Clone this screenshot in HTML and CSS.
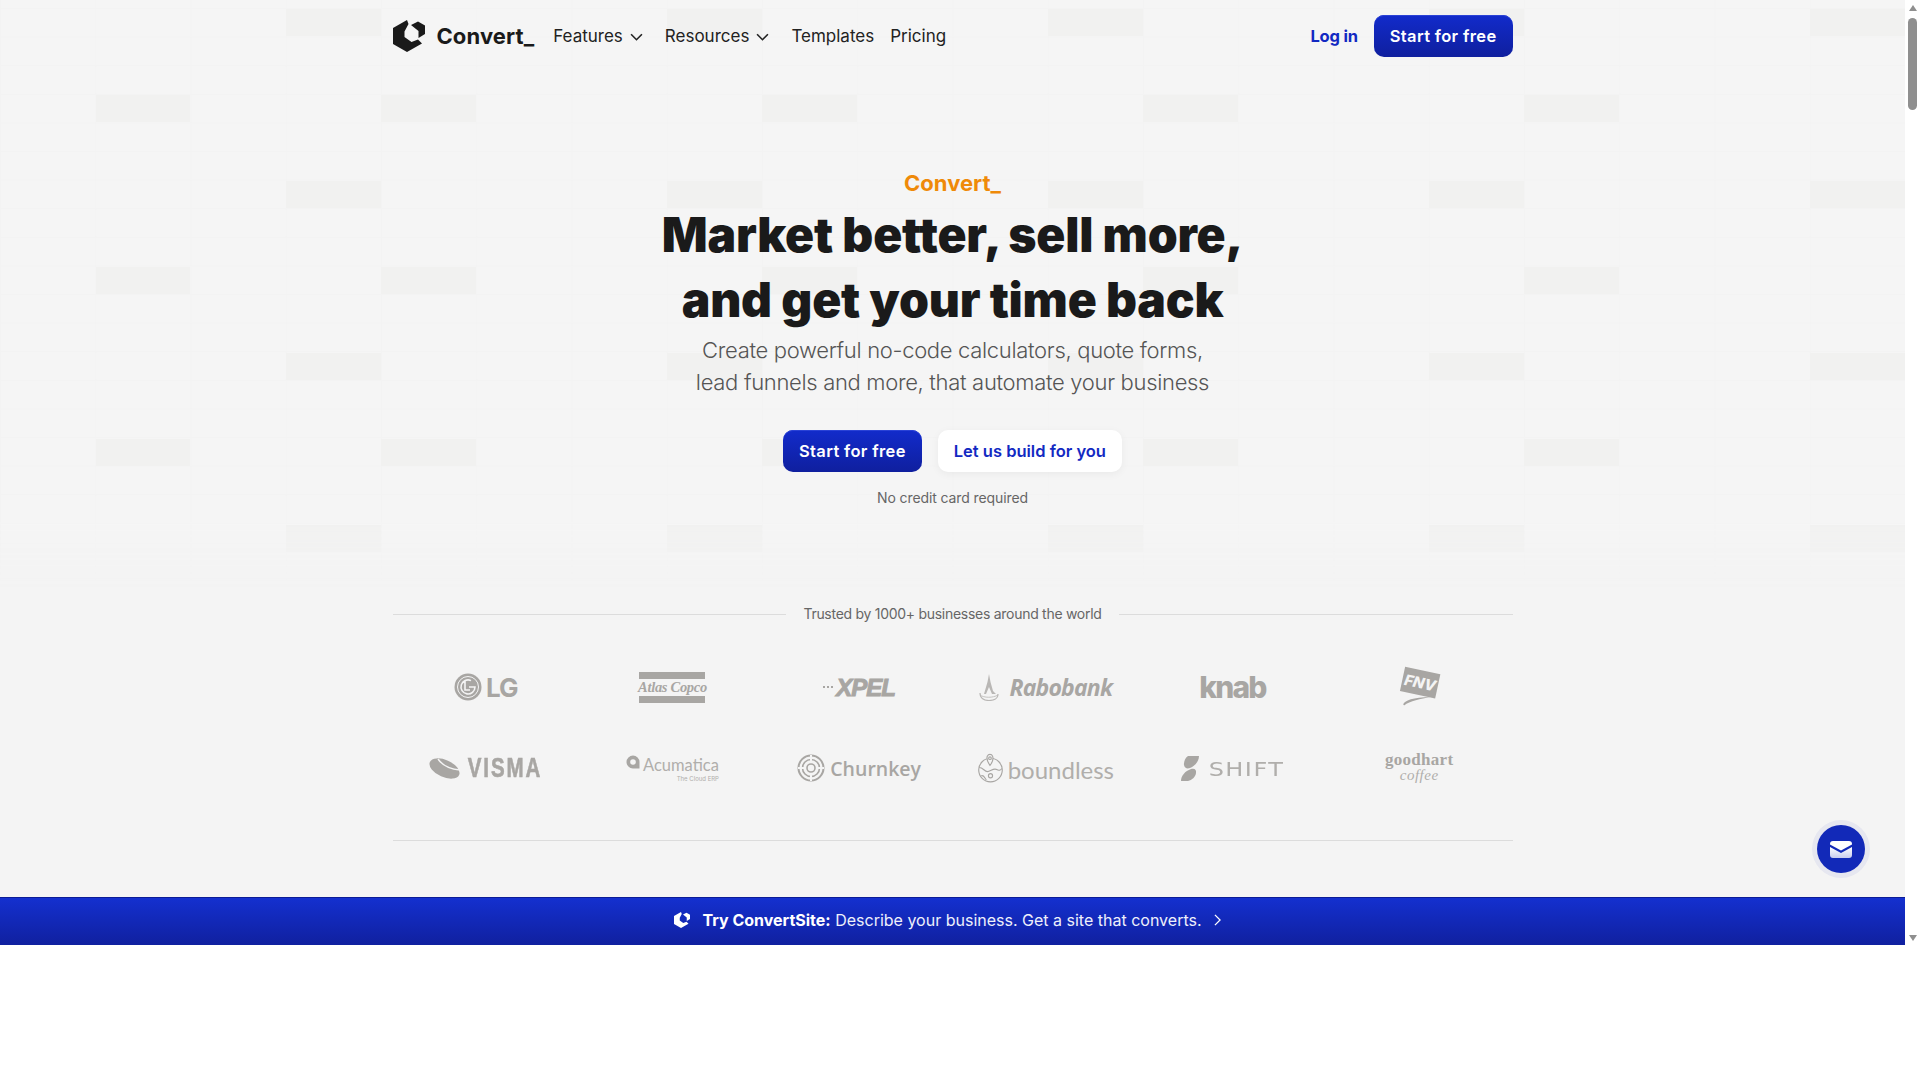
FILE: index.html
```html
<!DOCTYPE html>
<html lang="en">
<head>
    <meta charset="UTF-8">
    <meta name="viewport" content="width=device-width, initial-scale=1.0">
    <title>Convert_</title>
    <link rel="stylesheet" href="styles.css">
</head>
<body>
    <div class="window">
        <div class="page">
            <!-- faint checker grid behind the hero -->
            <svg class="hero-bg" width="1905" height="590" aria-hidden="true">
                <defs>
                    <pattern id="lines" width="95.25" height="28.6" patternUnits="userSpaceOnUse" y="8">
                        <path d="M0 0H95.25M0 0V28.6" fill="none" stroke="#f2f2f2" stroke-width="1"/>
                    </pattern>
                    <pattern id="cells-a" width="381" height="172" patternUnits="userSpaceOnUse">
                        <rect x="286" y="9" width="95" height="27" fill="#f1f1f0"/>
                        <rect x="0" y="95" width="95" height="27" fill="#f1f1f0"/>
                    </pattern>
                </defs>
                <rect width="1905" height="590" fill="url(#lines)"/>
                <rect x="95" width="1810" height="590" fill="url(#cells-a)"/>
                <rect x="96" y="95" width="94" height="27" fill="#f1f1f0"/>
                <rect x="96" y="267" width="94" height="27" fill="#f1f1f0"/>
                <rect x="96" y="439" width="94" height="27" fill="#f1f1f0"/>
            </svg>

            <div class="container">
                <nav class="nav">
                    <a class="brand">
                        <svg class="brand-mark" viewBox="0 0 32 32">
                            <path d="M14 0L15.500 4L11.500 11.500V17L18.500 22L25 19.500L29 23.500L14 32L0 24V8Z" fill="#1a1a1a"/>
                            <path d="M18 5L25 1.500L32 5.500V14L25.500 18V11Z" fill="#1a1a1a"/>
                        </svg>
                        <span class="brand-name">Convert_</span>
                    </a>
                    <ul class="nav-links">
                        <li>Features <svg class="chevron" viewBox="0 0 12 7"><path d="M1 1L6 6L11 1"/></svg></li>
                        <li>Resources <svg class="chevron" viewBox="0 0 12 7"><path d="M1 1L6 6L11 1"/></svg></li>
                        <li>Templates</li>
                        <li>Pricing</li>
                    </ul>
                    <a class="login">Log in</a>
                    <a class="btn btn-primary">Start for free</a>
                </nav>

                <section class="hero">
                    <div class="eyebrow">Convert_</div>
                    <h1>Market better, sell more,<br>and get your time back</h1>
                    <p>Create powerful no-code calculators, quote forms,<br>lead funnels and more, that automate your business</p>
                    <div class="hero-actions">
                        <a class="btn btn-primary">Start for free</a>
                        <a class="btn btn-white">Let us build for you</a>
                    </div>
                    <div class="hero-note">No credit card required</div>
                </section>

                <section class="trust">
                    <div class="trust-title"><span>Trusted by 1000+ businesses around the world</span></div>
                    <div class="logos">
                        <div class="logo">
                            <svg class="mark-lg" viewBox="0 0 28 28">
                                <circle cx="14" cy="14" r="13.5" fill="#a8a6a3"/>
                                <circle cx="14" cy="14" r="10.5" fill="none" stroke="#f4f4f4" stroke-width="1"/>
                                <path d="M11 7V17H16M15 14H21A7 7 0 1 1 17 7.6" fill="none" stroke="#f4f4f4" stroke-width="1.6"/>
                                <circle cx="10" cy="9" r="1.2" fill="#f4f4f4"/>
                            </svg>
                            <span class="t-lg">LG</span>
                        </div>
                        <div class="logo">
                            <div class="atlas"><span>Atlas Copco</span></div>
                        </div>
                        <div class="logo">
                            <span class="xpel-dots"></span>
                            <span class="t-xpel">XPEL</span>
                        </div>
                        <div class="logo">
                            <svg class="mark-rabo" viewBox="0 0 20 27">
                                <path d="M10 0L11.5 8L14 17L17 20H13L10 13L7 20H5L8.5 8Z" fill="#b9b7b5"/>
                                <path d="M1 19C1 25 6 26.5 10 26.5S19 25 19 20" fill="none" stroke="#b9b7b5" stroke-width="1.2"/>
                                <path d="M1 21C5 24 14 24 19 21" fill="none" stroke="#b9b7b5" stroke-width=".8"/>
                            </svg>
                            <span class="t-rabo">Rabobank</span>
                        </div>
                        <div class="logo"><span class="t-knab">knab</span></div>
                        <div class="logo">
                            <div class="fnv">
                                <span>FNV</span>
                                <svg viewBox="0 0 30 10"><path d="M1 9C2 5 12 1 30 1C20 3 8 5 2 10Z" fill="#a8a6a3"/></svg>
                            </div>
                        </div>

                        <div class="logo">
                            <svg class="mark-visma" viewBox="0 0 31 21">
                                <ellipse cx="15.5" cy="10.5" rx="16" ry="8.5" transform="rotate(24 15.500 10.500)" fill="#a8a6a3"/>
                                <path d="M9 1C13 7 20 11 31 12" fill="none" stroke="#f4f4f4" stroke-width="1.4"/>
                            </svg>
                            <span class="t-visma">VISMA</span>
                        </div>
                        <div class="logo">
                            <svg class="mark-acu" viewBox="0 0 14 14">
                                <path d="M7 .5A6.5 6.5 0 0 0 .5 7C.5 10.5 3.5 13.5 7 13.5H13.5V7A6.5 6.5 0 0 0 7 .5Z" fill="#a8a6a3"/>
                                <circle cx="7" cy="7" r="2.8" fill="#f4f4f4"/>
                            </svg>
                            <div class="acu">
                                <span class="t-acu">Acumatica</span>
                                <span class="t-acu-sub">The Cloud ERP</span>
                            </div>
                        </div>
                        <div class="logo">
                            <svg class="mark-churn" viewBox="0 0 28 28" fill="none" stroke="#a8a6a3">
                                <circle cx="14" cy="14" r="12.5" stroke-width="2"/>
                                <circle cx="14" cy="14" r="8.5" stroke-width="1.6"/>
                                <circle cx="14" cy="14" r="4" stroke-width="1.6"/>
                                <path d="M14 1V7M14 21V27M1 14H7M21 14H27" stroke="#f4f4f4" stroke-width="2"/>
                            </svg>
                            <span class="t-churn">Churnkey</span>
                        </div>
                        <div class="logo">
                            <svg class="mark-bound" viewBox="0 0 24 29" fill="none" stroke="#a8a6a3" stroke-width="1.1">
                                <circle cx="12" cy="16.5" r="11.4"/>
                                <path d="M9 3C7.5 6 9.5 9 11.5 12C14 9 15 6 14 3A2.700 2.700 0 0 0 9 3Z" fill="#f4f4f4"/>
                                <circle cx="11.5" cy="5" r="1.3"/>
                                <path d="M1 14C5 14 6 18 9 18S15 14 18 16S23 15 23 15M3 22C6 21 6 24 8 26"/>
                                <circle cx="12" cy="22" r="2"/>
                            </svg>
                            <span class="t-bound">boundless</span>
                        </div>
                        <div class="logo">
                            <svg class="mark-shift" viewBox="0 0 18 25">
                                <path d="M7 0H18C18 5 14 10 9 12C6 13 3.5 12 3 9C2.7 6 4 2 7 0Z" fill="#a8a6a3"/>
                                <path d="M10 13C14 12 15.5 14 15 17C14.5 21 11 24 7 25H0C0 20 4 15 10 13Z" fill="#a8a6a3"/>
                            </svg>
                            <span class="t-shift">SHIFT</span>
                        </div>
                        <div class="logo">
                            <div class="goodhart">
                                <span class="t-good">goodhart</span>
                                <span class="t-coffee">coffee</span>
                            </div>
                        </div>
                    </div>
                    <div class="trust-end"></div>
                </section>
            </div>

            <div class="banner">
                <svg class="banner-mark" viewBox="0 0 32 32">
                    <path d="M14 0L15.500 4L11.500 11.500V17L18.500 22L25 19.500L29 23.500L14 32L0 24V8Z" fill="#fff"/>
                    <path d="M18 5L25 1.500L32 5.500V14L25.500 18V11Z" fill="#fff"/>
                </svg>
                <span><b>Try ConvertSite:</b> Describe your business. Get a site that converts.</span>
                <svg class="banner-arrow" viewBox="0 0 8 14"><path d="M1 1L7 7L1 13"/></svg>
            </div>

            <a class="chat-btn">
                <svg viewBox="0 0 22 17">
                    <defs>
                        <linearGradient id="env" x1="0" y1="0" x2="0" y2="1">
                            <stop offset="0" stop-color="#fff"/>
                            <stop offset="1" stop-color="#c9cdee"/>
                        </linearGradient>
                    </defs>
                    <path d="M3 0H19A3 3 0 0 1 22 3V3.5L11 9.5L0 3.5V3A3 3 0 0 1 3 0Z" fill="#fff"/>
                    <path d="M0 6L11 12L22 6V14A3 3 0 0 1 19 17H3A3 3 0 0 1 0 14Z" fill="url(#env)"/>
                </svg>
            </a>
        </div>

        <div class="scrollbar">
            <span class="arrow-up"></span>
            <span class="thumb"></span>
            <span class="arrow-down"></span>
        </div>
    </div>
</body>
</html>
```

FILE: styles.css
```css
:root {
    --blue: #1229c2;
    --ink: #1a1a1a;
    --grey: #666;
    --logo: #a8a6a3;
}

* {
    box-sizing: border-box;
}

body {
    margin: 0;
    background: white;
    font-family: Inter, 'Liberation Sans', sans-serif;
    color: var(--ink);
    overflow: hidden;
}

.window {
    display: flex;
    height: 945px;
}

.page {
    position: relative;
    flex: 1;
    display: flex;
    flex-direction: column;
    background: #f4f4f4;
    overflow: hidden;
}

.hero-bg {
    position: absolute;
    top: 0;
    left: 0;
    background: #f5f5f5;
    -webkit-mask-image: linear-gradient(to bottom, black 88%, transparent);
    mask-image: linear-gradient(to bottom, black 88%, transparent);
}

.container {
    position: relative;
    width: 1120px;
    margin: 0 auto;
}

/* nav */
.nav {
    display: flex;
    align-items: center;
    height: 72px;
}

.brand {
    display: flex;
    align-items: center;
    gap: 12px;
}

.brand-mark {
    width: 32px;
    height: 32px;
}

.brand-name {
    font-size: 22px;
    font-weight: 700;
    letter-spacing: 0.1px;
}

.nav-links {
    display: flex;
    gap: 16px;
    margin: 0 auto 0 19px;
    padding: 0;
    list-style: none;
    font-size: 17px;
    color: #222;
}

.nav-links li {
    display: flex;
    align-items: center;
    gap: 7px;
}

.chevron {
    width: 13px;
    height: 8px;
    margin: 2px 6px 0 0;
    fill: none;
    stroke: #222;
    stroke-width: 1.5;
}

.login {
    margin-right: 16px;
    font-size: 16.5px;
    font-weight: 700;
    letter-spacing: -0.2px;
    color: var(--blue);
}

/* buttons */
.btn {
    display: inline-flex;
    align-items: center;
    height: 42px;
    padding: 0 16px;
    border-radius: 10px;
    font-size: 16.5px;
    font-weight: 600;
}

.btn-primary {
    background: linear-gradient(#122bcb, #0f1f9e);
    box-shadow: inset 0 1px 0 #2a42d6;
    color: white;
    letter-spacing: 0.35px;
}

.btn-white {
    background: white;
    box-shadow: 0 2px 8px rgba(0,0,0,0.05);
    color: var(--blue);
}

/* hero */
.hero {
    padding-top: 96px;
    text-align: center;
}

.eyebrow {
    font-size: 22px;
    line-height: 30px;
    font-weight: 700;
    color: #ef8a09;
}

.hero h1 {
    margin: 4px 0 0;
    font-size: 48px;
    line-height: 65px;
    font-weight: 900;
    letter-spacing: -0.2px;
    color: var(--ink);
}

.hero p {
    margin: 2px 0 0;
    font-size: 22px;
    line-height: 32px;
    font-weight: 300;
    letter-spacing: -0.32px;
    color: #555;
}

.hero-actions {
    display: flex;
    justify-content: center;
    gap: 16px;
    margin-top: 32px;
}

.hero-note {
    margin-top: 17px;
    font-size: 14px;
    line-height: 18px;
    letter-spacing: -0.1px;
    color: var(--grey);
}

/* trusted by */
.trust {
    margin-top: 97px;
}

.trust-title {
    display: flex;
    align-items: center;
    gap: 17px;
    font-size: 14px;
    line-height: 20px;
    letter-spacing: -0.28px;
    color: var(--grey);
}

.trust-title::before,
.trust-title::after {
    content: "";
    flex: 1;
    border-top: 1px solid #dcdcdc;
}

.logos {
    display: grid;
    grid-template-columns: repeat(6, 1fr);
    grid-auto-rows: 50px;
    row-gap: 31px;
    margin-top: 38px;
    color: var(--logo);
}

.logo {
    display: flex;
    align-items: center;
    justify-content: center;
    white-space: nowrap;
}

.trust-end {
    margin-top: 47px;
    border-top: 1px solid #dcdcdc;
}

/* logo wall, one block per brand */
.mark-lg {
    width: 28px;
    height: 28px;
    margin-right: 4px;
}

.t-lg {
    font-size: 26px;
    font-weight: 700;
    letter-spacing: -1px;
}

.atlas {
    display: flex;
    align-items: center;
    justify-content: center;
    width: 66px;
    height: 31px;
    border-top: 7px solid var(--logo);
    border-bottom: 7px solid var(--logo);
    font-family: 'Liberation Serif', serif;
    font-size: 14.5px;
    font-weight: 700;
    font-style: italic;
    letter-spacing: -0.3px;
    white-space: nowrap;
}

.xpel-dots {
    width: 12px;
    height: 2px;
    margin-right: 1px;
    background: linear-gradient(to right, var(--logo) 50%, transparent 50%) 0 0 / 4px 2px;
}

.t-xpel {
    margin-top: 1px;
    font-family: 'Liberation Sans', sans-serif;
    font-size: 24px;
    font-weight: 700;
    font-style: italic;
    letter-spacing: -1px;
    -webkit-text-stroke: 1px var(--logo);
}

.mark-rabo {
    width: 20px;
    height: 27px;
    margin-right: 10px;
}

.t-rabo {
    font-family: 'Open Sans', sans-serif;
    font-size: 23px;
    font-weight: 700;
    font-style: italic;
    letter-spacing: -0.8px;
}

.t-knab {
    font-size: 30px;
    font-weight: 800;
    letter-spacing: -1.8px;
}

.fnv {
    display: flex;
    flex-direction: column;
    align-items: center;
    width: 38px;
    margin-top: 2px;
    transform: rotate(12deg);
}

.fnv span {
    padding: 1px 2px;
    background: var(--logo);
    color: #f4f4f4;
    font-size: 15px;
    line-height: 23px;
    font-weight: 800;
    font-style: italic;
}

.fnv svg {
    width: 28px;
    height: 10px;
    margin-top: 1px;
    transform: rotate(-12deg);
}

.mark-visma {
    width: 31px;
    height: 21px;
    margin-right: 7px;
}

.t-visma {
    display: inline-block;
    margin: 0 -11.6px;
    font-family: 'Liberation Sans', sans-serif;
    font-size: 27px;
    font-weight: 700;
    letter-spacing: 2.5px;
    -webkit-text-stroke: 0.6px var(--logo);
    transform: scaleX(0.76);
}

.mark-acu {
    width: 14px;
    height: 14px;
    margin: 0 3px 12px 0;
}

.acu {
    display: flex;
    flex-direction: column;
    align-items: flex-end;
}

.t-acu {
    font-family: Lato, sans-serif;
    font-size: 16.5px;
    line-height: 20px;
    color: #b0aeab;
}

.t-acu-sub {
    font-size: 6px;
    line-height: 7px;
    color: #b0aeab;
}

.mark-churn {
    width: 28px;
    height: 28px;
    margin-right: 5px;
}

.t-churn {
    margin-top: 1px;
    font-family: 'Open Sans', sans-serif;
    font-size: 19.5px;
    font-weight: 600;
}

.mark-bound {
    width: 25px;
    height: 30px;
    margin-right: 5px;
}

.t-bound {
    margin-top: 2px;
    font-family: Lato, sans-serif;
    font-size: 24px;
    color: #b0aeab;
}

.mark-shift {
    width: 18px;
    height: 25px;
    margin-right: 10px;
}

.t-shift {
    display: inline-block;
    margin: 1px 6px 0;
    font-family: 'DejaVu Sans', sans-serif;
    font-size: 20px;
    letter-spacing: 1.2px;
    color: #b0aeab;
    transform: scaleX(1.2);
}

.goodhart {
    display: flex;
    flex-direction: column;
    align-items: center;
    margin-top: -3px;
}

.t-good {
    font-family: 'Liberation Serif', serif;
    font-size: 17px;
    line-height: 16px;
    font-weight: 700;
    letter-spacing: 0.3px;
}

.t-coffee {
    font-family: 'Liberation Serif', serif;
    font-size: 15px;
    line-height: 14px;
    font-style: italic;
    letter-spacing: 0.5px;
    color: #b0aeab;
}

/* bottom banner */
.banner {
    position: relative;
    display: flex;
    align-items: center;
    justify-content: center;
    gap: 12px;
    height: 48px;
    margin-top: auto;
    padding: 0 10px 4px 0;
    border-top: 1px solid #0c1c96;
    background: linear-gradient(#1430cf, #10209f);
    color: #eef0fb;
    font-size: 16px;
}

.banner b {
    color: white;
    font-weight: 700;
}

.banner-mark {
    width: 16px;
    height: 16px;
}

.banner-arrow {
    width: 7px;
    height: 12px;
    fill: none;
    stroke: white;
    stroke-width: 1.5;
}

/* floating chat button */
.chat-btn {
    position: absolute;
    left: 1817px;
    top: 825px;
    display: flex;
    align-items: center;
    justify-content: center;
    width: 48px;
    height: 48px;
    border-radius: 50%;
    background: #1229b8;
    box-shadow: 0 0 0 5px rgba(18,41,194,0.06);
}

.chat-btn svg {
    width: 22px;
    height: 17px;
}

/* fake browser scrollbar */
.scrollbar {
    display: flex;
    flex-direction: column;
    align-items: center;
    width: 15px;
    padding: 5px 0 4px;
    background: white;
}

.arrow-up,
.arrow-down {
    width: 0;
    height: 0;
    border-left: 4.5px solid transparent;
    border-right: 4.5px solid transparent;
}

.arrow-up {
    border-bottom: 6px solid #8f8f8f;
}

.arrow-down {
    margin-top: auto;
    border-top: 6px solid #8f8f8f;
}

.thumb {
    width: 9px;
    height: 92px;
    margin-top: 7px;
    border-radius: 5px;
    background: #8f8f8f;
}
```
